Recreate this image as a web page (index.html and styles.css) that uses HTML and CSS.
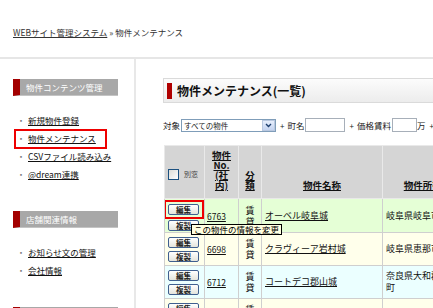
FILE: index.html
```html
<!DOCTYPE html>
<html lang="ja">
<head>
<meta charset="utf-8">
<title>物件メンテナンス</title>
<link rel="stylesheet" href="styles.css">
</head>
<body>
<div class="crumb"><a href="#">WEBサイト管理システム</a> » 物件メンテナンス</div>
<div class="wrap">
  <aside class="side">
    <h2 class="side-h">物件コンテンツ管理</h2>
    <ul class="menu">
      <li><a href="#">新規物件登録</a></li>
      <li class="marked"><a href="#">物件メンテナンス</a><span class="mark"></span></li>
      <li><a href="#">CSVファイル読み込み</a></li>
      <li><a href="#">@dream連携</a></li>
    </ul>
    <h2 class="side-h">店舗関連情報</h2>
    <ul class="menu">
      <li><a href="#">お知らせ文の管理</a></li>
      <li><a href="#">会社情報</a></li>
    </ul>
    <h2 class="side-h">その他</h2>
  </aside>
  <main class="main">
    <h1 class="title">物件メンテナンス(一覧)</h1>
    <div class="filter">
      <span>対象</span>
      <span class="select"><span class="select-text">すべての物件</span><span class="select-btn"><svg width="7" height="5" viewBox="0 0 7 5"><path d="M1 1 L3.5 3.5 L6 1" fill="none" stroke="#1d3e6e" stroke-width="1.4"/></svg></span></span>
      <span class="plus">+</span><span>町名</span>
      <span class="inp inp-town"></span>
      <span class="plus">+</span><span>価格賃料</span>
      <span class="inp inp-price"></span>
      <span>万</span><span class="plus">+</span>
    </div>
    <div class="tbl-wrap">
      <table class="list">
        <colgroup>
          <col class="c1"><col class="c2"><col class="c3"><col class="c4"><col class="c5"><col class="c6">
        </colgroup>
        <thead>
          <tr class="head">
            <th class="h1"><span class="chk"></span><span class="betsu">別窓</span></th>
            <th><a href="#">物件<br>No.<br>(社<br>内)</a></th>
            <th><a href="#">分<br>類</a></th>
            <th><a href="#">物件名称</a></th>
            <th><a href="#">物件所在地</a></th>
            <th><a href="#">価格</a></th>
          </tr>
        </thead>
        <tbody>
          <tr class="r-green">
            <td class="btns first"><span class="btn-mark"><span class="btn">編集</span></span><span class="btn">複製</span></td>
            <td class="no"><a href="#">6763</a></td>
            <td class="kind">賃<br>貸</td>
            <td class="name"><a href="#">オーベル岐阜城</a></td>
            <td class="addr">岐阜県岐阜市長良町</td>
            <td></td>
          </tr>
          <tr class="r-yellow">
            <td class="btns"><span class="btn">編集</span><span class="btn">複製</span></td>
            <td class="no"><a href="#">6698</a></td>
            <td class="kind">賃<br>貸</td>
            <td class="name"><a href="#">クラヴィーア岩村城</a></td>
            <td class="addr">岐阜県恵那市岩村町</td>
            <td></td>
          </tr>
          <tr class="r-cyan">
            <td class="btns"><span class="btn">編集</span><span class="btn">複製</span></td>
            <td class="no"><a href="#">6712</a></td>
            <td class="kind">賃<br>貸</td>
            <td class="name"><a href="#">コートデコ郡山城</a></td>
            <td class="addr">奈良県大和郡山市北町</td>
            <td></td>
          </tr>
          <tr class="r-yellow">
            <td class="btns"><span class="btn">編集</span><span class="btn">複製</span></td>
            <td class="no"><a href="#">6720</a></td>
            <td class="kind">賃<br>貸</td>
            <td class="name"><a href="#">グランデ城北</a></td>
            <td class="addr">岐阜県岐阜市</td>
            <td></td>
          </tr>
        </tbody>
      </table>
      <div class="tip">この物件の情報を変更</div>
    </div>
  </main>
</div>
</body>
</html>
```
FILE: styles.css
```css
html, body {
  margin: 0;
  padding: 0;
  overflow: hidden;
  width: 433px;
  height: 308px;
  background: #fff;
}
body {
  font-family: "Noto Sans CJK JP", "Liberation Sans", sans-serif;
  font-size: 8.5px;
  color: #111;
}
a { color: #111; text-decoration: underline; }

.crumb {
  box-sizing: border-box;
  height: 57px;
  padding: 27px 0 0 13px;
  line-height: 10px;
  color: #333;
  white-space: nowrap;
}
.crumb a { color: #333; }

.wrap {
  display: flex;
  border-top: 2px solid #e6e6e6;
  width: 900px;
}
.side {
  box-sizing: border-box;
  flex: 0 0 136px;
  border-right: 2px solid #e8e8e8;
  padding: 20px 0 0 13px;
  height: 260px;
}
.side-h {
  box-sizing: border-box;
  width: 105px;
  height: 17px;
  margin: 0;
  border-left: 7px solid #a30000;
  border-bottom: 1px solid #c4c4c4;
  background: #a8a8a8;
  color: #fff;
  font-size: 8.5px;
  font-weight: normal;
  line-height: 16px;
  padding-left: 6px;
  white-space: nowrap;
}
.menu {
  list-style: none;
  margin: 15px 0 28px;
  padding: 0;
}
.menu li {
  position: relative;
  line-height: 18px;
  height: 18px;
  padding-left: 3px;
  white-space: nowrap;
}
.menu li::before {
  content: "・";
  display: inline-block;
  width: 10px;
  text-align: center;
  color: #777;
  margin-right: 2px;
}
.mark {
  position: absolute;
  left: 1px;
  top: 0;
  width: 93px;
  height: 20px;
  box-sizing: border-box;
  border: 2px solid #ee0000;
}

.main {
  flex: 1;
  padding: 19px 0 0 27px;
}
.title {
  box-sizing: border-box;
  width: 600px;
  height: 25px;
  margin: 0;
  border: 1px solid #dadada;
  background: linear-gradient(#fcfcfc, #ececec);
  font-size: 12px;
  font-weight: bold;
  line-height: 23px;
  color: #111;
  display: flex;
  align-items: center;
  white-space: nowrap;
}
.title::before {
  content: "";
  width: 5px;
  height: 16px;
  background: #b00000;
  margin: 0 5px 0 3px;
}

.filter {
  display: flex;
  align-items: center;
  height: 14px;
  margin-top: 15px;
  white-space: nowrap;
  color: #222;
}
.plus { margin: 0 3px 0 4px; font-size: 8px; }
.select {
  box-sizing: border-box;
  display: flex;
  align-items: center;
  width: 95px;
  height: 13px;
  border: 1px solid #7f9db9;
  margin-left: 1px;
  background: #fff;
}
.select-text { flex: 1; font-size: 7.5px; padding-left: 2px; line-height: 11px; }
.select-btn {
  box-sizing: border-box;
  width: 13px;
  height: 11px;
  border: 1px solid #b9c8e0;
  background: linear-gradient(#e6eefc, #c4d3f0);
  display: flex;
  align-items: center;
  justify-content: center;
}
.inp {
  box-sizing: border-box;
  display: inline-block;
  height: 14px;
  border: 1px solid #a7afb9;
  background: #fff;
}
.inp-town { width: 40px; margin-left: 1px; }
.inp-price { width: 25px; margin-left: 1px; }

.tbl-wrap {
  position: relative;
  margin-top: 13px;
  margin-left: 1px;
}
.list {
  border-collapse: collapse;
  table-layout: fixed;
  width: 388px;
}
.c1 { width: 40px; }
.c2 { width: 34px; }
.c3 { width: 23px; }
.c4 { width: 121px; }
.c5 { width: 90px; }
.c6 { width: 80px; }
.list th, .list td {
  border: 1px solid #cfcfcf;
  padding: 0;
}
.head { height: 53px; }
.list th {
  background: #d5d5d5;
  border-color: #e9e9e9;
  vertical-align: bottom;
  padding: 0 0 8px;
  font-size: 9.5px;
  line-height: 10px;
  font-weight: bold;
  text-align: center;
  white-space: nowrap;
  overflow: hidden;
}
.list th a { color: #111; }
.list th.h1 {
  vertical-align: middle;
  padding: 4px 0 0 3px;
  text-align: left;
}
.chk {
  display: inline-block;
  vertical-align: middle;
  box-sizing: border-box;
  width: 11px;
  height: 11px;
  border: 1px solid #1c5180;
  background: linear-gradient(135deg, #dcdcd6, #fff);
}
.betsu {
  font-size: 7px;
  font-weight: normal;
  color: #444;
  margin-left: 5px;
  vertical-align: middle;
}

.list td {
  vertical-align: middle;
  font-size: 9px;
  line-height: 12px;
}
.r-green { height: 34px; }
.r-yellow { height: 33px; }
.r-cyan { height: 33px; }
.r-green td { background: #e5ffd6; }
.r-yellow td { background: #ffffeb; }
.r-cyan td { background: #ebffff; }
.list td.btns { padding: 2px 0 2px 3px; }
.list td.btns.first { padding: 1px 0 0 3px; vertical-align: top; }
.btn {
  box-sizing: border-box;
  display: block;
  width: 31px;
  height: 11px;
  border: 1px solid #3f5f8f;
  border-radius: 2px;
  background: linear-gradient(#ffffff, #e4e4dc);
  font-size: 7.5px;
  font-weight: bold;
  line-height: 9px;
  text-align: center;
  color: #222;
}
.btn + .btn { margin-top: 3px; }
.btn-mark {
  display: block;
  width: 40px;
  box-sizing: border-box;
  margin: 0 0 1px -4px;
  border: 2px solid #ee0000;
  padding: 2px 0 2px 2px;
}
.btn-mark + .btn { margin-top: 0; }
.list td.no { padding-left: 2px; font-size: 8.5px; }
.list td.kind { text-align: center; line-height: 11px; }
.list td.name { padding-left: 3px; white-space: nowrap; overflow: hidden; }
.list td.addr { padding-left: 3px; }

.tip {
  position: absolute;
  left: 27px;
  top: 79px;
  box-sizing: border-box;
  height: 11px;
  padding: 0 2px;
  border: 1px solid #000;
  background: #ffffe1;
  font-size: 8.5px;
  line-height: 9px;
  white-space: nowrap;
  color: #000;
}
```
